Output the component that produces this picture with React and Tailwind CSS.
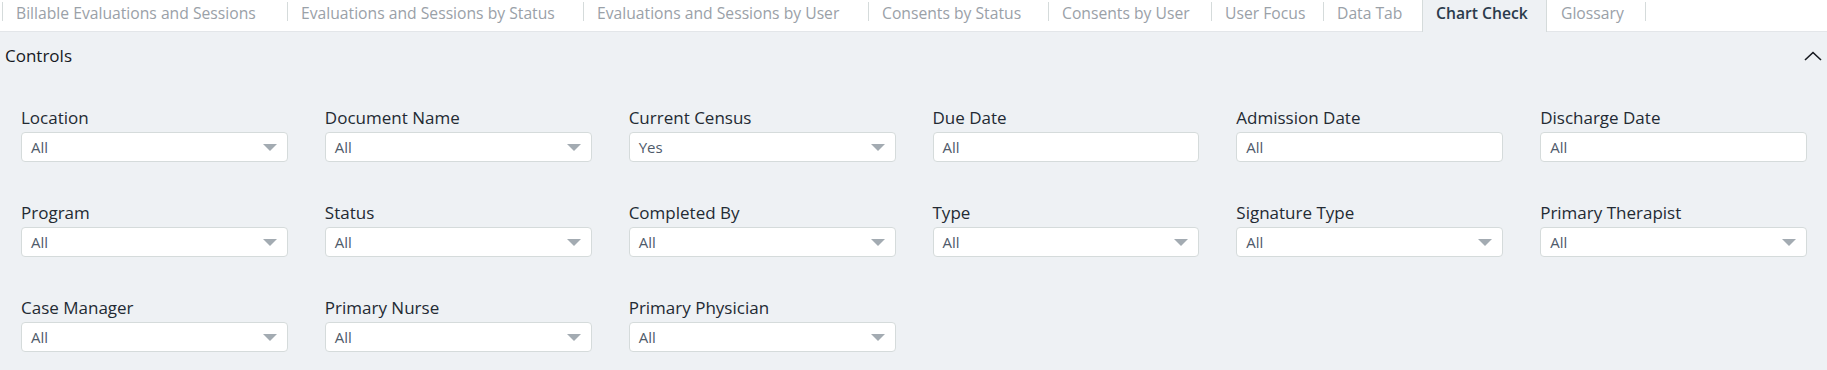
import React from 'react';

const tabs = [
  { label: 'Billable Evaluations and Sessions', w: 'w-[285px]' },
  { label: 'Evaluations and Sessions by Status', w: 'w-[296px]' },
  { label: 'Evaluations and Sessions by User', w: 'w-[285px]' },
  { label: 'Consents by Status', w: 'w-[180px]' },
  { label: 'Consents by User', w: 'w-[163px]' },
  { label: 'User Focus', w: 'w-[112px]' },
  { label: 'Data Tab', w: 'w-[99px]' },
  { label: 'Chart Check', w: 'w-[125px]', active: true },
  { label: 'Glossary', w: 'w-[98px]' },
];

const controls = [
  { label: 'Location', value: 'All' },
  { label: 'Document Name', value: 'All' },
  { label: 'Current Census', value: 'Yes' },
  { label: 'Due Date', value: 'All', date: true },
  { label: 'Admission Date', value: 'All', date: true },
  { label: 'Discharge Date', value: 'All', date: true },
  { label: 'Program', value: 'All' },
  { label: 'Status', value: 'All' },
  { label: 'Completed By', value: 'All' },
  { label: 'Type', value: 'All' },
  { label: 'Signature Type', value: 'All' },
  { label: 'Primary Therapist', value: 'All' },
  { label: 'Case Manager', value: 'All' },
  { label: 'Primary Nurse', value: 'All' },
  { label: 'Primary Physician', value: 'All' },
];

function Separator() {
  return <span className="mt-[2px] h-[19px] w-px shrink-0 bg-[#d5dbdb]" />;
}

function TabBar() {
  return (
    <div className="flex h-[32px] items-start border-b border-[#e3e6e9] bg-white pl-[2px]">
      {tabs.map((tab, i) => {
        const prevActive = i > 0 && tabs[i - 1].active;
        if (tab.active) {
          return (
            <div
              key={tab.label}
              className={`${tab.w} -mb-px flex h-[32px] shrink-0 border-x border-[#d5dbdb] bg-[#eef1f4] pl-[13px] pt-[2px]`}
            >
              <span className="whitespace-nowrap text-[15.7px] leading-[22px] font-semibold text-[#2b3b4c]">{tab.label}</span>
            </div>
          );
        }
        return (
          <div key={tab.label} className={`${tab.w} flex shrink-0 items-start`}>
            {prevActive ? <span className="w-px shrink-0" /> : <Separator />}
            <span className="whitespace-nowrap pl-[13px] pt-[2px] text-[15.7px] leading-[22px] text-[#9aa1a8]">
              {tab.label}
            </span>
          </div>
        );
      })}
      <Separator />
    </div>
  );
}

function Control({ label, value, date }) {
  return (
    <div className="flex flex-col gap-[4px]">
      <div className="whitespace-nowrap text-[17px] leading-[20px] text-[#232a33]">{label}</div>
      <div className="flex h-[30px] items-center justify-between rounded-[4px] border border-[#d5dbdb] bg-white pl-[9px] pr-[10px]">
        <span className="text-[15px] leading-[20px] text-[#4f5b6b]">{value}</span>
        {!date && (
          <svg width="14" height="7" viewBox="0 0 14 7" className="shrink-0">
            <path d="M0 0 L14 0 L7 7 Z" fill="#a3abb2" />
          </svg>
        )}
      </div>
    </div>
  );
}

export default function App() {
  return (
    <div className="h-[370px] w-[1827px] overflow-hidden bg-[#eef1f4] font-['Open_Sans',sans-serif]">
      <TabBar />
      <div className="mt-[12px] flex h-[24px] items-center justify-between px-[5px]">
        <span className="text-[17px] leading-[24px] text-[#16191f]">Controls</span>
        <svg width="18" height="10" viewBox="0 0 18 10">
          <path d="M1 9 L9 1.5 L17 9" fill="none" stroke="#16191f" strokeWidth="1.6" />
        </svg>
      </div>
      <div className="mt-[40px] grid grid-cols-6 gap-x-[37px] gap-y-[41px] pl-[21px] pr-[20px]">
        {controls.map((c) => (
          <Control key={c.label} {...c} />
        ))}
      </div>
    </div>
  );
}
